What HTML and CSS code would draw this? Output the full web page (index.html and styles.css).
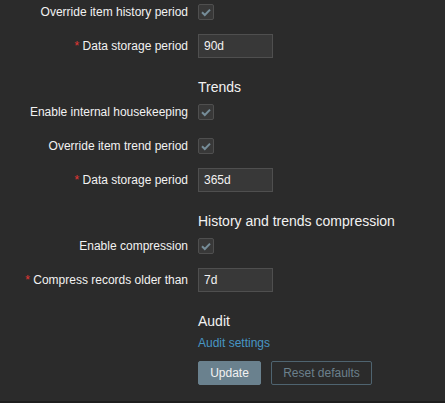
FILE: index.html
```html
<!DOCTYPE html>
<html>
<head>
<meta charset="utf-8">
<link rel="stylesheet" href="styles.css">
</head>
<body>
<div class="form">
  <div class="row">
    <div class="label">Override item history period</div>
    <div class="field"><span class="cb"><svg viewBox="0 0 16 16" width="16" height="16"><path d="M4 8.2 L6.8 11 L12 5.6" fill="none" stroke="#768d99" stroke-width="2"/></svg></span></div>
  </div>
  <div class="row">
    <div class="label"><span class="req">*</span> Data storage period</div>
    <div class="field"><input class="inp" type="text" value="90d"></div>
  </div>
  <div class="row heading">
    <div class="label"></div>
    <div class="field"><h4>Trends</h4></div>
  </div>
  <div class="row">
    <div class="label">Enable internal housekeeping</div>
    <div class="field"><span class="cb"><svg viewBox="0 0 16 16" width="16" height="16"><path d="M4 8.2 L6.8 11 L12 5.6" fill="none" stroke="#768d99" stroke-width="2"/></svg></span></div>
  </div>
  <div class="row">
    <div class="label">Override item trend period</div>
    <div class="field"><span class="cb"><svg viewBox="0 0 16 16" width="16" height="16"><path d="M4 8.2 L6.8 11 L12 5.6" fill="none" stroke="#768d99" stroke-width="2"/></svg></span></div>
  </div>
  <div class="row">
    <div class="label"><span class="req">*</span> Data storage period</div>
    <div class="field"><input class="inp" type="text" value="365d"></div>
  </div>
  <div class="row heading">
    <div class="label"></div>
    <div class="field"><h4>History and trends compression</h4></div>
  </div>
  <div class="row">
    <div class="label">Enable compression</div>
    <div class="field"><span class="cb"><svg viewBox="0 0 16 16" width="16" height="16"><path d="M4 8.2 L6.8 11 L12 5.6" fill="none" stroke="#768d99" stroke-width="2"/></svg></span></div>
  </div>
  <div class="row">
    <div class="label"><span class="req">*</span> Compress records older than</div>
    <div class="field"><input class="inp" type="text" value="7d"></div>
  </div>
  <div class="row heading">
    <div class="label"></div>
    <div class="field"><h4>Audit</h4></div>
  </div>
  <div class="row linkrow">
    <div class="label"></div>
    <div class="field"><a class="link" href="#">Audit settings</a></div>
  </div>
  <div class="row">
    <div class="label"></div>
    <div class="field buttons">
      <button class="btn primary">Update</button>
      <button class="btn alt">Reset defaults</button>
    </div>
  </div>
</div>
<div class="footer"></div>
</body>
</html>
```
FILE: styles.css
```css
html, body {
  margin: 0;
  padding: 0;
  background: #2b2b2b;
  color: #f2f2f2;
  font-family: "Liberation Sans", Arial, sans-serif;
  font-size: 12px;
}
.form {
  display: flex;
  flex-direction: column;
  padding-bottom: 16px;
}
.row {
  display: grid;
  grid-template-columns: 188px 1fr;
  column-gap: 10px;
  height: 24px;
  align-items: center;
  margin-bottom: 10px;
}
.row:last-child {
  margin-bottom: 0;
}
.label {
  text-align: right;
  white-space: nowrap;
  line-height: 14px;
}
.req {
  color: #e33734;
}
.field {
  display: flex;
  align-items: center;
}
.cb {
  display: inline-flex;
  width: 16px;
  height: 16px;
  box-sizing: border-box;
  border: 1px solid #4f4f4f;
  background: #383838;
  border-radius: 2px;
  align-items: center;
  justify-content: center;
}
.cb svg {
  display: block;
  margin: -1px;
}
.inp {
  width: 75px;
  height: 24px;
  box-sizing: border-box;
  background: #383838;
  border: 1px solid #4f4f4f;
  color: #f2f2f2;
  font-family: "Liberation Sans", Arial, sans-serif;
  font-size: 12px;
  padding: 0 5px;
  margin: 0;
  outline: none;
}
.heading {
  height: auto;
  padding-top: 11px;
  margin-bottom: 5px;
}
.heading h4 {
  margin: 0;
  font-size: 14px;
  font-weight: normal;
  line-height: 16px;
  color: #f2f2f2;
}
.linkrow {
  height: 17px;
}
.link {
  color: #4796c4;
  text-decoration: none;
  line-height: 16px;
}
.buttons {
  gap: 10px;
}
.btn {
  height: 24px;
  box-sizing: border-box;
  font-family: "Liberation Sans", Arial, sans-serif;
  font-size: 12px;
  border-radius: 2px;
  margin: 0;
  padding: 0 11px;
}
.primary {
  width: 63px;
  background: #6a818e;
  border: 1px solid #6a818e;
  color: #f2f2f2;
}
.alt {
  width: 101px;
  background: transparent;
  border: 1px solid #4f6470;
  color: #6b808c;
}
.footer {
  height: 10px;
  background: #1e1e1e;
}
```
